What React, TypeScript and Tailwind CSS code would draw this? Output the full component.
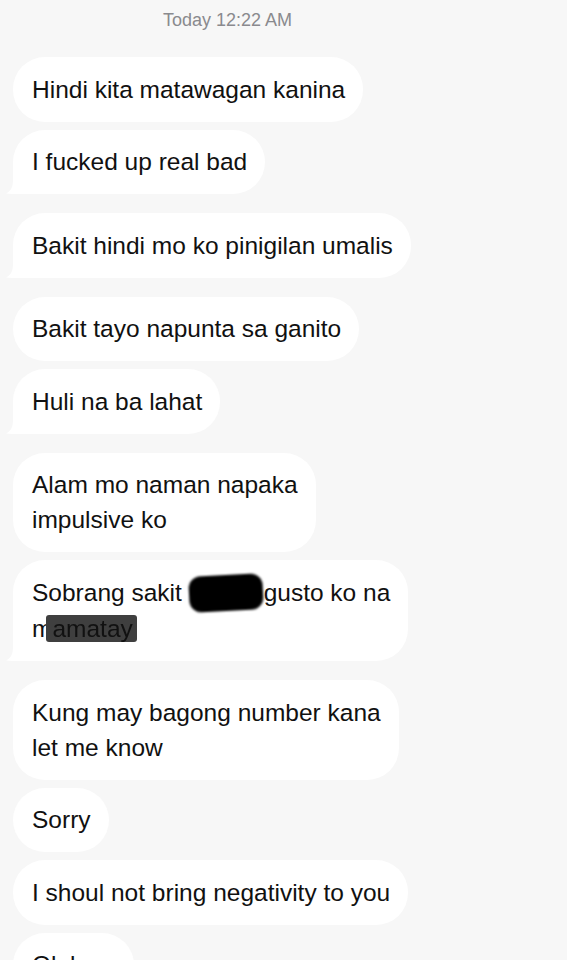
import React from 'react';

type Msg = { lines: React.ReactNode[]; tail?: boolean; gapTop: number };

const Tail = () => (
  <svg width="24" height="22" viewBox="0 0 24 22" className="absolute -left-[7px] bottom-0">
    <path d="M7 0 H24 V22 H12 C8 22 4 22 0 21.5 C5 19 7 15 7 8 Z" fill="#ffffff" />
  </svg>
);

const messages: Msg[] = [
  { lines: ['Hindi kita matawagan kanina'], gapTop: 0 },
  { lines: ['I fucked up real bad'], tail: true, gapTop: 8 },
  { lines: ['Bakit hindi mo ko pinigilan umalis'], tail: true, gapTop: 19 },
  { lines: ['Bakit tayo napunta sa ganito'], gapTop: 19 },
  { lines: ['Huli na ba lahat'], tail: true, gapTop: 8 },
  { lines: ['Alam mo naman napaka', 'impulsive ko'], gapTop: 19 },
  {
    lines: [
      <>
        Sobrang sakit{' '}
        <span className="inline-block align-middle w-[74px] h-[36px] -mt-[2px] bg-black rounded-[12px] blur-[1px] -rotate-3 mr-[1px]"></span>
        gusto ko na
      </>,
      <>
        m<span className="bg-[#3f3f3f] rounded-[3px] -ml-[6px] pl-[6px] pr-[4px] blur-[0.4px]">amatay</span>
      </>,
    ],
    tail: true,
    gapTop: 8,
  },
  { lines: ['Kung may bagong number kana', 'let me know'], gapTop: 19 },
  { lines: ['Sorry'], gapTop: 8 },
  { lines: ['I shoul not bring negativity to you'], gapTop: 8 },
  { lines: ['Ok lang'], gapTop: 8 },
];

const App: React.FC = () => {
  return (
    <div
      className="w-[567px] h-[960px] overflow-hidden bg-[#f7f7f7]"
      style={{ fontFamily: '"Liberation Sans", Arial, sans-serif' }}
    >
      <div className="pt-[9px] pl-[163px] text-[18px] leading-[22px] text-[#8a8a8e]">Today 12:22 AM</div>

      <div className="flex flex-col items-start pl-[13px] pt-[26px]">
        {messages.map((m, idx) => (
          <div
            key={idx}
            style={{ marginTop: m.gapTop }}
            className={`relative bg-white rounded-[32px] pl-[19px] pr-[18px] py-[14.75px] text-[24.5px] leading-[35px] text-[#111111] whitespace-nowrap ${
              m.tail ? 'rounded-bl-[14px]' : ''
            }`}
          >
            {m.lines.map((l, i) => (
              <div key={i}>{l}</div>
            ))}
            {m.tail && <Tail />}
          </div>
        ))}
      </div>
    </div>
  );
};

export default App;
